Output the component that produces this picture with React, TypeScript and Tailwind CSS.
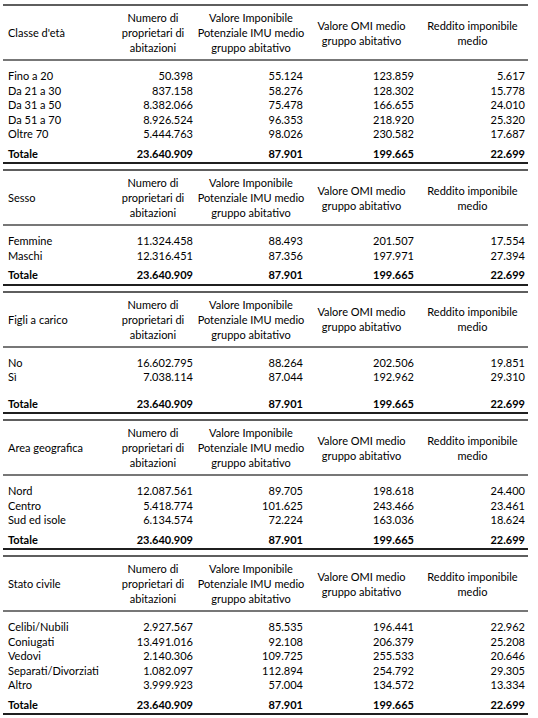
import React from "react";

type Table = {
  label: string;
  rows: [string, string, string, string, string][];
  extraGap?: boolean;
};

const tables: Table[] = [
  {
    label: "Classe d'età",
    rows: [
      ["Fino a 20", "50.398", "55.124", "123.859", "5.617"],
      ["Da 21 a 30", "837.158", "58.276", "128.302", "15.778"],
      ["Da 31 a 50", "8.382.066", "75.478", "166.655", "24.010"],
      ["Da 51 a 70", "8.926.524", "96.353", "218.920", "25.320"],
      ["Oltre 70", "5.444.763", "98.026", "230.582", "17.687"],
    ],
  },
  {
    label: "Sesso",
    rows: [
      ["Femmine", "11.324.458", "88.493", "201.507", "17.554"],
      ["Maschi", "12.316.451", "87.356", "197.971", "27.394"],
    ],
  },
  {
    label: "Figli a carico",
    rows: [
      ["No", "16.602.795", "88.264", "202.506", "19.851"],
      ["Sì", "7.038.114", "87.044", "192.962", "29.310"],
    ],
    extraGap: true,
  },
  {
    label: "Area geografica",
    rows: [
      ["Nord", "12.087.561", "89.705", "198.618", "24.400"],
      ["Centro", "5.418.774", "101.625", "243.466", "23.461"],
      ["Sud ed isole", "6.134.574", "72.224", "163.036", "18.624"],
    ],
  },
  {
    label: "Stato civile",
    rows: [
      ["Celibi/Nubili", "2.927.567", "85.535", "196.441", "22.962"],
      ["Coniugati", "13.491.016", "92.108", "206.379", "25.208"],
      ["Vedovi", "2.140.306", "109.725", "255.533", "20.646"],
      ["Separati/Divorziati", "1.082.097", "112.894", "254.792", "29.305"],
      ["Altro", "3.999.923", "57.004", "134.572", "13.334"],
    ],
  },
];

const grid = "grid grid-cols-[107px_86px_110px_111px_111px]";

function Row({ cells, bold }: { cells: string[]; bold?: boolean }) {
  return (
    <div className={`${grid} h-[14.5px] leading-[14.5px] ${bold ? "font-bold" : ""}`}>
      <div className="pl-[5px] whitespace-nowrap">{cells[0]}</div>
      <div className="text-right pr-[3px]">{cells[1]}</div>
      <div className="text-right pr-[3px]">{cells[2]}</div>
      <div className="text-right pr-[3px]">{cells[3]}</div>
      <div className="text-right pr-[3px]">{cells[4]}</div>
    </div>
  );
}

function DataTable({ t }: { t: Table }) {
  return (
    <div className="border-t-2 border-[#5e5e5e] mb-[5px]">
      <div className={`${grid} h-[55px] border-b-2 border-[#777777] leading-[15px]`}>
        <div className="flex items-center pl-[5px] whitespace-nowrap">{t.label}</div>
        <div className="flex items-center justify-center text-center">
          Numero di
          <br />
          proprietari di
          <br />
          abitazioni
        </div>
        <div className="flex items-center justify-center text-center whitespace-nowrap">
          Valore Imponibile
          <br />
          Potenziale IMU medio
          <br />
          gruppo abitativo
        </div>
        <div className="flex items-center justify-center text-center whitespace-nowrap">
          Valore OMI medio
          <br />
          gruppo abitativo
        </div>
        <div className="flex items-center justify-center text-center whitespace-nowrap">
          Reddito imponibile
          <br />
          medio
        </div>
      </div>
      <div className="pt-[8px]">
        {t.rows.map((r, i) => (
          <Row key={i} cells={r} />
        ))}
      </div>
      <div className={`${t.extraGap ? "pt-[12px]" : "pt-[5px]"} pb-[1px] border-b-2 border-[#1f1f1f]`}>
        <Row cells={["Totale", "23.640.909", "87.901", "199.665", "22.699"]} bold />
      </div>
    </div>
  );
}

export default function App() {
  return (
    <div
      className="w-[538px] h-[718px] bg-white text-black pt-[4px] pl-[3px] text-[11px] overflow-hidden"
      style={{ fontFamily: "Lato, 'Open Sans', sans-serif" }}
    >
      <div className="w-[525px]">
        {tables.map((t, i) => (
          <DataTable key={i} t={t} />
        ))}
      </div>
    </div>
  );
}
